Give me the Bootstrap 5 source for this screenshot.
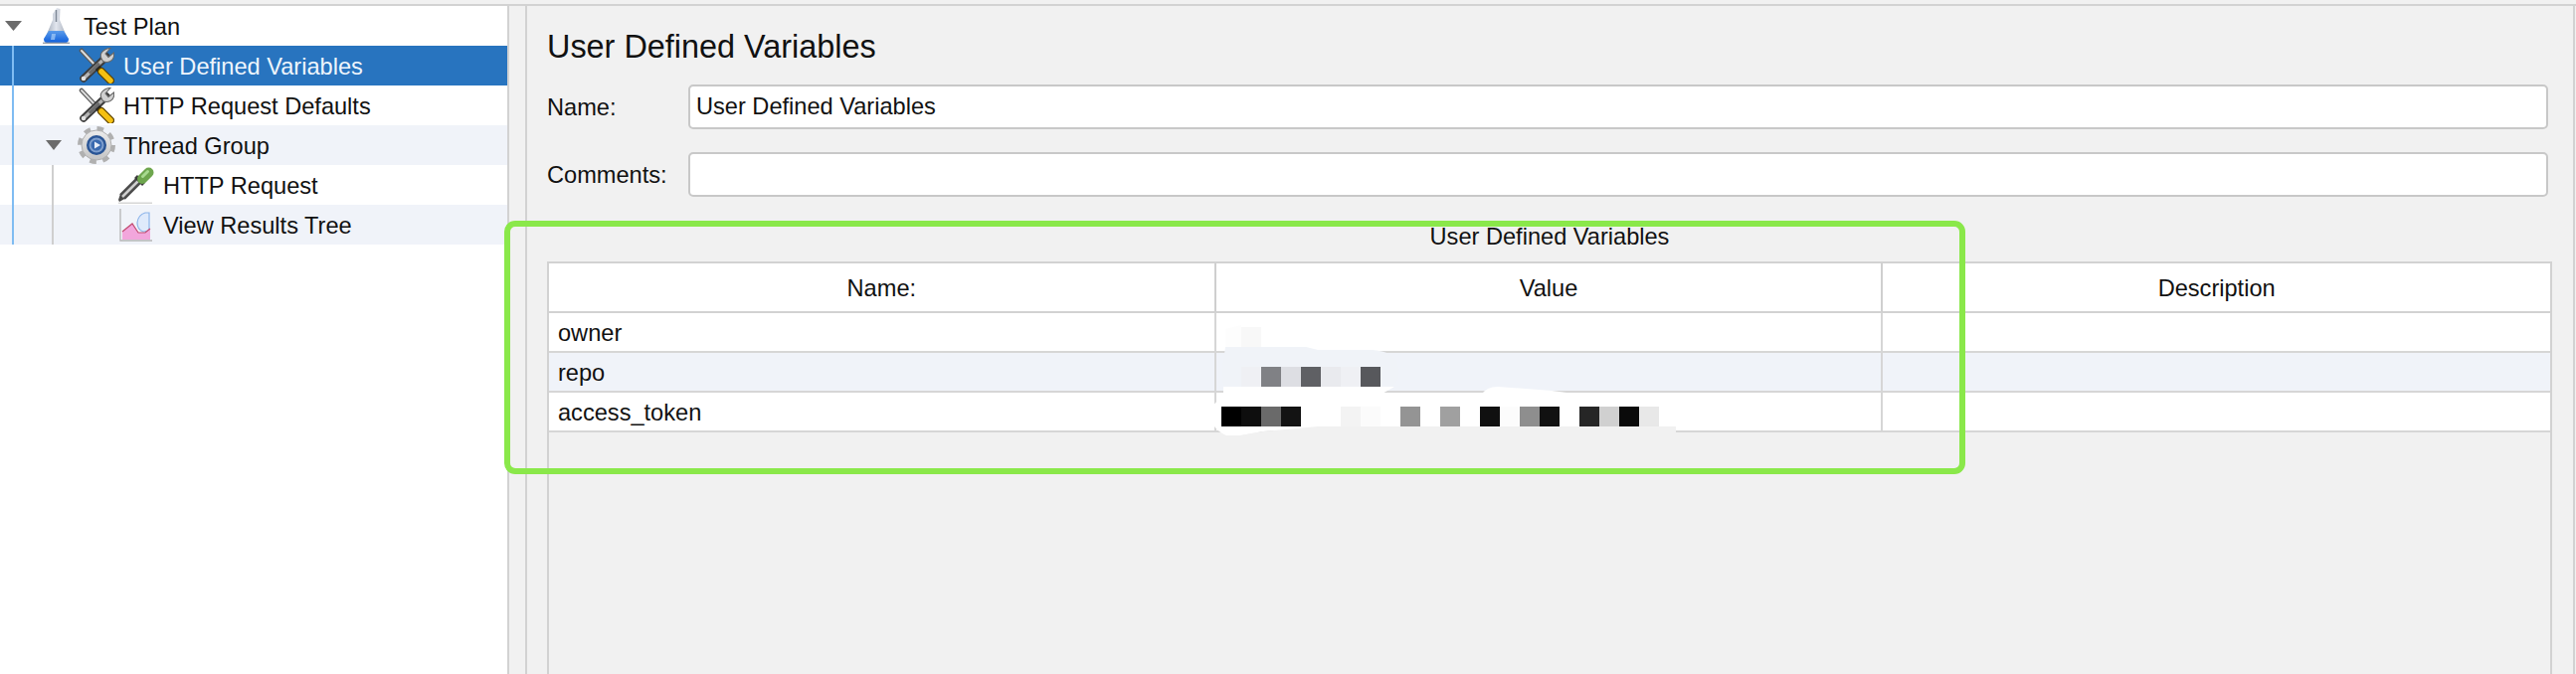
<!DOCTYPE html>
<html lang="en">
<head>
    <meta charset="UTF-8">
    <meta name="viewport" content="width=device-width, initial-scale=1.0">
    <title>User Defined Variables</title>
    <link rel="stylesheet" href="https://cdn.jsdelivr.net/npm/bootstrap@5.3.2/dist/css/bootstrap.min.css">
    <style>
        html, body {
            height: 100%;
        }
        body {
            background-color: #f1f1f1;
            color: #111;
            font-family: "Liberation Sans", Arial, sans-serif;
            font-size: 23.6px;
            line-height: 28px;
            overflow: hidden;
            position: relative;
        }
        .top-strip {
            height: 6px;
            border-bottom: 2px solid #d2d2d2;
        }
        .main-split {
            height: 672px;
        }
        .tree-pane {
            width: 512px;
            flex-shrink: 0;
            background-color: #fff;
            border-right: 2px solid #d2d2d2;
            position: relative;
        }
        .tree-row {
            height: 40px;
            white-space: nowrap;
        }
        .tree-row span {
            padding-top: 2px;
        }
        .tree-row.striped {
            background-color: #f0f3f9;
        }
        .tree-row.selected {
            background-color: #2874bf;
            color: #eef5fc;
        }
        .root-row { padding-left: 5px; }
        .root-row .twisty { margin-right: 21px; }
        .root-row .node-icon { margin-right: 14px; }
        .leaf-row { padding-left: 79px; }
        .leaf-row .node-icon { margin-right: 9px; }
        .group-row { padding-left: 46px; }
        .group-row .twisty { margin-right: 16px; }
        .group-row .node-icon { margin-right: 8px; }
        .child-row { padding-left: 118px; }
        .child-row .node-icon { margin-right: 9px; }
        .twisty, .node-icon {
            flex-shrink: 0;
        }
        .guide-blue, .guide-grey {
            position: absolute;
            width: 2px;
        }
        .guide-blue {
            left: 12px;
            top: 40px;
            height: 200px;
            background-color: #7fbcf2;
        }
        .guide-grey {
            left: 52px;
            top: 160px;
            height: 80px;
            background-color: #cfcfcf;
        }
        .split-gap {
            width: 18px;
            flex-shrink: 0;
            border-right: 2px solid #d2d2d2;
        }
        .editor-pane {
            width: 2059px;
            flex-shrink: 0;
            padding: 0 21px 0 20px;
            border-right: 2px solid #d2d2d2;
        }
        .editor-title {
            font-size: 32.4px;
            line-height: 34px;
            margin-top: 24px;
            margin-bottom: 21px;
        }
        .field-row {
            margin-right: 4px;
            margin-bottom: 23px;
        }
        .field-label {
            width: 142px;
            flex-shrink: 0;
        }
        .field-input.form-control {
            height: 45px;
            padding: 0 6px;
            font-size: 23.6px;
            color: #111;
            border: 2px solid #c8c8c8;
            border-radius: 5px;
            box-shadow: none;
        }
        .vars-caption {
            line-height: 24px;
            margin-top: 28px;
            margin-bottom: 13px;
        }
        .vars-box {
            position: relative;
            height: 416px;
            border: 2px solid #d2d2d2;
            border-bottom: 0;
        }
        .vars-table {
            table-layout: fixed;
            border-collapse: separate;
            border-spacing: 0;
        }
        .vars-table > :not(caption) > * > * {
            height: 40px;
            padding: 1px 9px 0;
            color: #111;
            font-weight: 400;
            vertical-align: middle;
            background-color: #fff;
            border-bottom: 2px solid #d6d6d6;
            border-right: 2px solid #d6d6d6;
        }
        .vars-table > thead > * > * {
            height: 50px;
            border-bottom-color: #d2d2d2;
            border-right-color: #cfcfcf;
        }
        .vars-table > :not(caption) > * > *:last-child {
            border-right: 0;
        }
        .vars-table > tbody > tr:nth-child(even) > * {
            background-color: #f0f3f9;
        }
        .redact-layer {
            position: absolute;
            left: -2px;
            top: -2px;
            width: 2016px;
            height: 180px;
            pointer-events: none;
        }
        .callout-frame {
            position: absolute;
            left: 507px;
            top: 222px;
            width: 1469px;
            height: 255px;
            border: 6px solid #8ae84a;
            border-radius: 11px;
            pointer-events: none;
        }
    </style>
</head>
<body>
    <svg width="0" height="0" class="d-block position-absolute">
        <defs>
            <linearGradient id="glassFill" x1="0" y1="0" x2="1" y2="0">
                <stop offset="0" stop-color="#98a2b2"/>
                <stop offset="0.5" stop-color="#e2e6ee"/>
                <stop offset="1" stop-color="#a3abb9"/>
            </linearGradient>
            <linearGradient id="liquidFill" x1="0" y1="0" x2="0" y2="1">
                <stop offset="0" stop-color="#5b9cea"/>
                <stop offset="1" stop-color="#0f5fdc"/>
            </linearGradient>
            <linearGradient id="gearFill" x1="0" y1="0" x2="0" y2="1">
                <stop offset="0" stop-color="#ececec"/>
                <stop offset="1" stop-color="#c4c4c4"/>
            </linearGradient>
            <symbol id="icon-flask" viewBox="0 0 27 36">
                <path d="M14 0 L17.500 1 L17 12 L25 31 L2 31 L10 12 L10 6 Z" fill="url(#glassFill)"/>
                <path d="M13.500 2 L13.500 14" stroke="#7f8896" stroke-width="1.500"/>
                <path d="M6 23 L21 23 L26 31 Q26 35 23 35 L4 35 Q1 35 1 31 Z" fill="url(#liquidFill)"/>
                <path d="M9 26 L13 26 L12 32 L8 32 Z" fill="#a8cdf6" opacity=".7"/>
                <path d="M0 35.300 L27 35.300" stroke="#9aa0a8" stroke-width="1.400"/>
            </symbol>
            <symbol id="icon-tools" viewBox="0 0 36 36">
                <path d="M3 3 L19 20" stroke="#5a5a5a" stroke-width="4.500" stroke-linecap="round"/>
                <path d="M3 3 L19 20" stroke="#dcdcdc" stroke-width="2" stroke-linecap="round"/>
                <path d="M28 9 L5 31" stroke="#3c3c3c" stroke-width="7.500" stroke-linecap="round"/>
                <path d="M28 9 L5 31" stroke="#b4b4b4" stroke-width="3.500"/>
                <path d="M21 16 L11 26" stroke="#6a6a6a" stroke-width="3.500"/>
                <path d="M32 0.500 L27 6 L30 9.500 L35.500 5 Q36.500 11 32 13.500 Q28 15.500 24.500 13.500 Q20.500 8.500 23.500 4.500 Q27 0.500 32 0.500 Z" fill="#d0d0d0" stroke="#666" stroke-width="1.100"/>
                <circle cx="5" cy="31" r="2.300" fill="#e2e2e2"/>
                <path d="M19 20 L23 24" stroke="#222" stroke-width="6"/>
                <path d="M23 24 L32 33" stroke="#5c4300" stroke-width="8" stroke-linecap="round"/>
                <path d="M23 24 L32 33" stroke="#f4c012" stroke-width="5.500" stroke-linecap="round"/>
            </symbol>
            <symbol id="icon-gear" viewBox="0 0 38 38">
                <circle cx="19" cy="19" r="16.500" fill="none" stroke="#b0b0b0" stroke-width="5" stroke-dasharray="6.500 6.460"/>
                <circle cx="19" cy="19" r="15" fill="url(#gearFill)" stroke="#b0b0b0" stroke-width="1"/>
                <circle cx="19" cy="19" r="10" fill="#2a5595"/>
                <circle cx="19" cy="19" r="7.500" fill="#7f9fcd"/>
                <circle cx="19" cy="19" r="5.500" fill="#3a6ab0"/>
                <path d="M17 15.500 L23 19 L17 22.500 Z" fill="#e8eef8"/>
            </symbol>
            <symbol id="icon-dropper" viewBox="0 0 37 37">
                <path d="M1 33 L3 27 L9 31 L2 35 Z" fill="#4a4a4a"/>
                <path d="M5 30 L21 14" stroke="#4c4c4c" stroke-width="8"/>
                <path d="M5 30 L21 14" stroke="#cfcfcf" stroke-width="2.500"/>
                <path d="M18.500 9.500 L26.500 17.500" stroke="#3a3a3a" stroke-width="4"/>
                <path d="M25 12 L31.500 5.500" stroke="#6ea64e" stroke-width="10" stroke-linecap="round"/>
                <path d="M25.500 9.500 L30.500 4.500" stroke="#a8da90" stroke-width="3" stroke-linecap="round"/>
                <path d="M1 36.300 L35 36.300" stroke="#d6d6d6" stroke-width="1.400"/>
            </symbol>
            <symbol id="icon-chart" viewBox="0 0 33 33">
                <path d="M1 0 L1 32 L33 32" fill="none" stroke="#b5b5b5" stroke-width="1.300"/>
                <path d="M26 4 Q19 6 18 14 Q18 21 24 23 L30 22 L30 4 Z" fill="#dfeafb" stroke="#8db5ea" stroke-width="1.200"/>
                <path d="M3 31 L3 23 L13 15 L19 24 L26 24 L31 20 L31 31 Z" fill="#f2a6dc"/>
                <path d="M3 23 L13 15 L19 24 L26 24 L31 20" fill="none" stroke="#c24a70" stroke-width="1.200"/>
            </symbol>
            <symbol id="icon-twisty" viewBox="0 0 16 10" preserveAspectRatio="none">
                <path d="M0 0 L16 0 L8 10 Z" fill="#6b6b6b"/>
            </symbol>
        </defs>
    </svg>

    <div class="top-strip"></div>
    <div class="main-split d-flex">
        <div class="tree-pane">
            <div class="tree-row root-row d-flex align-items-center">
                <svg class="twisty" width="17" height="10"><use href="#icon-twisty"/></svg>
                <svg class="node-icon" width="27" height="36"><use href="#icon-flask"/></svg>
                <span>Test Plan</span>
            </div>
            <div class="tree-row leaf-row selected d-flex align-items-center">
                <svg class="node-icon" width="36" height="36"><use href="#icon-tools"/></svg>
                <span>User Defined Variables</span>
            </div>
            <div class="tree-row leaf-row d-flex align-items-center">
                <svg class="node-icon" width="36" height="36"><use href="#icon-tools"/></svg>
                <span>HTTP Request Defaults</span>
            </div>
            <div class="tree-row group-row striped d-flex align-items-center">
                <svg class="twisty" width="16" height="10"><use href="#icon-twisty"/></svg>
                <svg class="node-icon" width="38" height="38"><use href="#icon-gear"/></svg>
                <span>Thread Group</span>
            </div>
            <div class="tree-row child-row d-flex align-items-center">
                <svg class="node-icon" width="37" height="37"><use href="#icon-dropper"/></svg>
                <span>HTTP Request</span>
            </div>
            <div class="tree-row child-row striped d-flex align-items-center">
                <svg class="node-icon" width="37" height="33"><use href="#icon-chart"/></svg>
                <span>View Results Tree</span>
            </div>
            <div class="guide-blue"></div>
            <div class="guide-grey"></div>
        </div>
        <div class="split-gap"></div>
        <div class="editor-pane">
            <div class="editor-title">User Defined Variables</div>
            <div class="field-row d-flex align-items-center">
                <label class="field-label" for="nameField">Name:</label>
                <input id="nameField" class="form-control field-input" type="text" value="User Defined Variables">
            </div>
            <div class="field-row d-flex align-items-center mb-0">
                <label class="field-label" for="commentsField">Comments:</label>
                <input id="commentsField" class="form-control field-input" type="text">
            </div>
            <div class="vars-caption text-center">User Defined Variables</div>
            <div class="vars-box">
                <table class="table vars-table mb-0">
                    <thead>
                        <tr>
                            <th class="text-center">Name:</th>
                            <th class="text-center">Value</th>
                            <th class="text-center">Description</th>
                        </tr>
                    </thead>
                    <tbody>
                        <tr><td>owner</td><td></td><td></td></tr>
                        <tr><td>repo</td><td></td><td></td></tr>
                        <tr><td>access_token</td><td></td><td></td></tr>
                    </tbody>
                </table>
                <!-- the values are painted over in the picture -->
                <svg class="redact-layer" viewBox="550 262 2016 180">
                    <path d="M1232 330 L1248 326 L1248 348 L1232 348 Z" fill="#fdfdfd"/>
                    <rect x="1248" y="328" width="20" height="20" fill="#f8f8f8"/>
                    <path d="M1232 348 L1313 348 L1325 351 L1380 351 Q1404 353 1406 368 Q1408 382 1400 388 L1230 388 Q1228 375 1230 362 Z" fill="#f0f3f8"/>
                    <path d="M1230 388 L1402 388 L1388 396 L1236 397 Q1218 402 1217 415 Q1217 430 1233 437 L1247 437 L1270 433 L1325 428 L1230 428 Z" fill="#fff"/>
                    <path d="M1490 396 Q1494 388 1506 388 L1560 392 L1590 396 Z" fill="#fff"/>
                    <rect x="1233" y="400" width="460" height="28" fill="#fff"/>
                    <path d="M1247 437 L1270 433 L1325 428 L1685 428 L1685 437 Z" fill="#f1f1f1"/>
                    <g id="repoCells"></g>
                    <g id="tokenCells"></g>
                </svg>
            </div>
        </div>
    </div>
    <div class="callout-frame"></div>

    <script>
        // pixel blocks of the blurred values: [x, colour]
        const repoCells = [[1248, '#eff0f4'], [1268, '#808185'], [1288, '#dddee3'], [1308, '#5f6064'], [1328, '#e9eaee'], [1348, '#eff0f4'], [1368, '#57585c']];
        const tokenCells = [[1228, '#000'], [1248, '#0e0e0e'], [1268, '#6a6a6a'], [1288, '#131313'], [1348, '#f3f3f3'], [1368, '#fbfbfb'], [1408, '#949494'], [1448, '#a0a0a0'], [1488, '#101010'], [1508, '#fcfcfc'], [1528, '#8e8e8e'], [1548, '#111'], [1588, '#262626'], [1608, '#d0d0d0'], [1628, '#0a0a0a'], [1648, '#e8e8e8']];

        function paintCells(id, cells, y) {
            document.getElementById(id).innerHTML = cells.map(c =>
                `<rect x="${c[0]}" y="${y}" width="20" height="20" fill="${c[1]}"/>`).join('');
        }

        paintCells('repoCells', repoCells, 368);
        paintCells('tokenCells', tokenCells, 408);
    </script>
    <script src="https://cdn.jsdelivr.net/npm/bootstrap@5.3.2/dist/js/bootstrap.bundle.min.js"></script>
</body>
</html>
